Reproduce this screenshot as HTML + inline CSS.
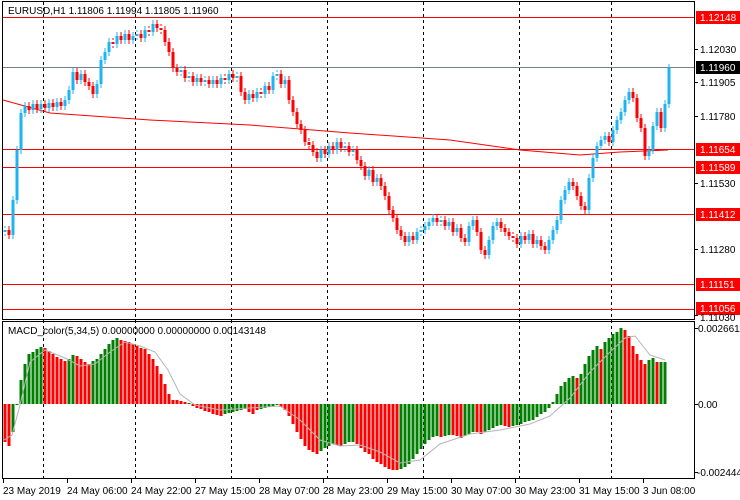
<!DOCTYPE html>
<html><head><meta charset="utf-8"><style>
html,body{margin:0;padding:0;background:#fff;width:740px;height:500px;overflow:hidden}
svg{display:block;font-family:"Liberation Sans",sans-serif;font-size:10px}
</style></head><body>
<svg width="740" height="500" xmlns="http://www.w3.org/2000/svg" xmlns:xlink="http://www.w3.org/1999/xlink">
<defs>
<path id="bu" d="M5 230V232M13 200V235M17 150V200M21 113V150M25 106V113M33 104V110M41 104V109M49 103V108M57 102V107M65 100V106M69 90V100M73 72V90M81 74V80M97 84V94M101 60V84M105 52V60M109 42V52M117 36V44M125 34V40M133 36V40M137 34V36M145 30V38M153 24V32M181 70V72M189 76V78M197 78V82M205 80V82M213 80V84M221 78V84M229 74V80M237 76V78M249 94V100M257 92V98M265 86V94M273 76V90M277 74V76M285 80V84M321 150V158M329 146V154M337 142V150M345 146V148M353 150V152M369 170V176M377 178V182M409 236V242M417 232V240M421 230V232M425 226V230M429 222V226M433 218V222M441 220V222M449 222V226M457 228V232M469 226V242M473 220V226M489 240V255M493 226V240M497 222V226M521 236V244M529 234V240M537 240V244M549 240V250M553 230V240M557 220V230M561 200V220M565 190V200M569 182V190M589 178V210M593 158V178M597 146V158M601 140V146M605 136V140M613 130V142M617 120V130M621 112V120M625 100V112M629 92V100M649 150V156M653 126V150M657 112V126M665 104V128M669 68V104"/>
<path id="be" d="M9 230V235M29 106V110M37 104V109M45 104V108M53 103V107M61 102V106M77 72V80M85 74V82M89 82V86M93 86V94M113 42V44M121 36V40M129 34V40M141 34V38M149 30V32M157 24V28M161 28V30M165 30V42M169 42V52M173 52V68M177 68V72M185 70V78M193 76V82M201 78V82M209 80V84M217 80V84M225 78V80M233 74V78M241 76V92M245 92V100M253 94V98M261 92V94M269 86V90M281 74V84M289 80V100M293 100V112M297 112V124M301 124V130M305 130V142M309 142V145M313 145V152M317 152V158M325 150V154M333 146V150M341 142V148M349 146V152M357 150V160M361 160V166M365 166V176M373 170V182M381 178V186M385 186V196M389 196V210M393 210V218M397 218V230M401 230V236M405 236V242M413 236V240M437 218V222M445 220V226M453 222V232M461 228V238M465 238V242M477 220V232M481 232V250M485 250V255M501 222V228M505 228V232M509 232V236M513 236V238M517 238V244M525 236V240M533 234V244M541 240V246M545 246V250M573 182V186M577 186V196M581 196V206M585 206V210M609 136V142M633 92V98M637 98V118M641 118V128M645 128V156M661 112V128"/>
</defs>
<rect x="2.5" y="1.5" width="692" height="318" fill="#fff" stroke="#000"/>
<rect x="2.5" y="321.5" width="692" height="157" fill="#fff" stroke="#000"/>
<g stroke="#000" stroke-dasharray="3,3">
<line x1="43.5" y1="2" x2="43.5" y2="478"/><line x1="135.5" y1="2" x2="135.5" y2="478"/><line x1="231.5" y1="2" x2="231.5" y2="478"/><line x1="327.5" y1="2" x2="327.5" y2="478"/><line x1="423.5" y1="2" x2="423.5" y2="478"/><line x1="519.5" y1="2" x2="519.5" y2="478"/><line x1="611.5" y1="2" x2="611.5" y2="478"/>
</g>
<g stroke="#f00">
<line x1="3" y1="17.5" x2="694" y2="17.5"/><line x1="3" y1="149.5" x2="694" y2="149.5"/><line x1="3" y1="167.5" x2="694" y2="167.5"/><line x1="3" y1="214.5" x2="694" y2="214.5"/><line x1="3" y1="284.5" x2="694" y2="284.5"/><line x1="3" y1="309.5" x2="694" y2="309.5"/>
</g>
<line x1="3" y1="67.5" x2="694" y2="67.5" stroke="#708090"/>
<path d="M3 100L50 113L150 120L250 125L350 133L450 140L520 150L580 155L620 152L668 150" fill="none" stroke="#f00"/>
<g stroke="#1eb4f0" fill="none">
<use xlink:href="#bu" stroke-width="3"/>
<use xlink:href="#bu" stroke-width="1" transform="translate(0,-4)"/>
<use xlink:href="#bu" stroke-width="1" transform="translate(0,4)"/>
</g>
<g stroke="#f00" fill="none">
<use xlink:href="#be" stroke-width="3"/>
<use xlink:href="#be" stroke-width="1" transform="translate(0,-4)"/>
<use xlink:href="#be" stroke-width="1" transform="translate(0,4)"/>
</g>
<path stroke="#f00" stroke-width="3" fill="none" d="M5 404V442M9 404V446M45 404V348M49 404V351M53 404V354M57 404V357M61 404V359M65 404V361M77 404V356M81 404V359M85 404V362M89 404V364M121 404V340M125 404V341M129 404V342M133 404V344M137 404V346M141 404V348M145 404V349M149 404V354M153 404V359M157 404V366M161 404V374M165 404V384M169 404V394M173 404V400M177 404V400M181 404V401M185 404V402M193 404V406M197 404V408M201 404V409M205 404V411M209 404V412M213 404V414M217 404V415M221 404V416M249 404V412M253 404V414M257 404V410M281 404V407M285 404V410M289 404V416M293 404V424M297 404V432M301 404V439M305 404V446M309 404V450M313 404V452M317 404V454M337 404V445M341 404V446M357 404V444M361 404V448M365 404V452M369 404V454M373 404V459M377 404V462M381 404V464M385 404V467M389 404V469M393 404V470M397 404V470M441 404V437M453 404V435M457 404V436M461 404V438M477 404V432M481 404V434M505 404V426M509 404V427M577 404V378M601 404V349M625 404V330M629 404V336M633 404V346M637 404V354M641 404V360M645 404V364M657 404V362"/>
<path stroke="#008000" stroke-width="3" fill="none" d="M13 404V432M17 404V405M21 404V380M25 404V364M29 404V354M33 404V352M37 404V349M41 404V347M69 404V359M73 404V355M93 404V361M97 404V359M101 404V354M105 404V349M109 404V344M113 404V340M117 404V338M189 404V403M225 404V414M229 404V413M233 404V412M237 404V411M241 404V410M245 404V409M261 404V409M265 404V408M269 404V407M273 404V406M277 404V405M321 404V451M325 404V448M329 404V446M333 404V444M345 404V444M349 404V442M353 404V442M401 404V469M405 404V467M409 404V464M413 404V459M417 404V454M421 404V449M425 404V444M429 404V440M433 404V437M437 404V436M445 404V436M449 404V435M465 404V436M469 404V434M473 404V432M485 404V432M489 404V430M493 404V428M497 404V426M501 404V425M513 404V426M517 404V425M521 404V424M525 404V422M529 404V421M533 404V420M537 404V417M541 404V414M545 404V412M549 404V408M553 404V402M557 404V394M561 404V386M565 404V382M569 404V378M573 404V376M581 404V374M585 404V364M589 404V356M593 404V350M597 404V346M605 404V342M609 404V338M613 404V334M617 404V332M621 404V328M649 404V360M653 404V358M661 404V362M665 404V362"/>
<path d="M4 440L12 435L20 405L30 362L45 350L65 358L80 366L95 364L110 352L125 342L140 346L155 352L168 370L180 394L195 405L220 410L250 408L280 406L300 420L320 440L340 446L360 445L380 452L400 463L420 460L440 444L470 434L500 430L530 424L550 416L570 398L590 372L610 352L625 338L635 336L650 355L665 360" fill="none" stroke="#b4b4b4"/>
<g stroke="#000"><path d="M694 49.5h4M694 82.5h4M694 116.5h4M694 183.5h4M694 249.5h4M694 315.5h4M694 328.5h4M694 404.5h4M694 472.5h4M3.5 479v4M67.5 479v4M131.5 479v4M195.5 479v4M259.5 479v4M323.5 479v4M387.5 479v4M451.5 479v4M515.5 479v4M579.5 479v4M643.5 479v4"/></g>
<g fill="#000">
<rect x="696" y="11" width="44" height="13" fill="#f00"/><rect x="696" y="61" width="44" height="13" fill="#000"/><rect x="696" y="143" width="44" height="13" fill="#f00"/><rect x="696" y="161" width="44" height="13" fill="#f00"/><rect x="696" y="208" width="44" height="13" fill="#f00"/><rect x="696" y="278" width="44" height="13" fill="#f00"/><rect x="696" y="302" width="44" height="13" fill="#f00"/>
<text x="700" y="53">1.12030</text><text x="700" y="86">1.11905</text><text x="700" y="120">1.11780</text><text x="700" y="187">1.11530</text><text x="700" y="253">1.11280</text><text x="700" y="321">1.11030</text>
<text x="698" y="332">0.0026611</text><text x="698" y="408">0.00</text><text x="697" y="476">-0.002444</text>
<g fill="#fff"><text x="700" y="21">1.12148</text><text x="700" y="71">1.11960</text><text x="700" y="153">1.11654</text><text x="700" y="171">1.11589</text><text x="700" y="218">1.11412</text><text x="700" y="288">1.11151</text><text x="700" y="312">1.11056</text></g>
<text x="8" y="14">EURUSD,H1  1.11806 1.11994 1.11805 1.11960</text>
<text x="8" y="334">MACD_color(5,34,5) 0.00000000 0.00000000 0.00143148</text>
<text x="3" y="494">23 May 2019</text><text x="67" y="494">24 May 06:00</text><text x="131" y="494">24 May 22:00</text><text x="195" y="494">27 May 15:00</text><text x="259" y="494">28 May 07:00</text><text x="323" y="494">28 May 23:00</text><text x="387" y="494">29 May 15:00</text><text x="451" y="494">30 May 07:00</text><text x="515" y="494">30 May 23:00</text><text x="579" y="494">31 May 15:00</text><text x="643" y="494">3 Jun 08:00</text>
</g>
</svg>
</body></html>
